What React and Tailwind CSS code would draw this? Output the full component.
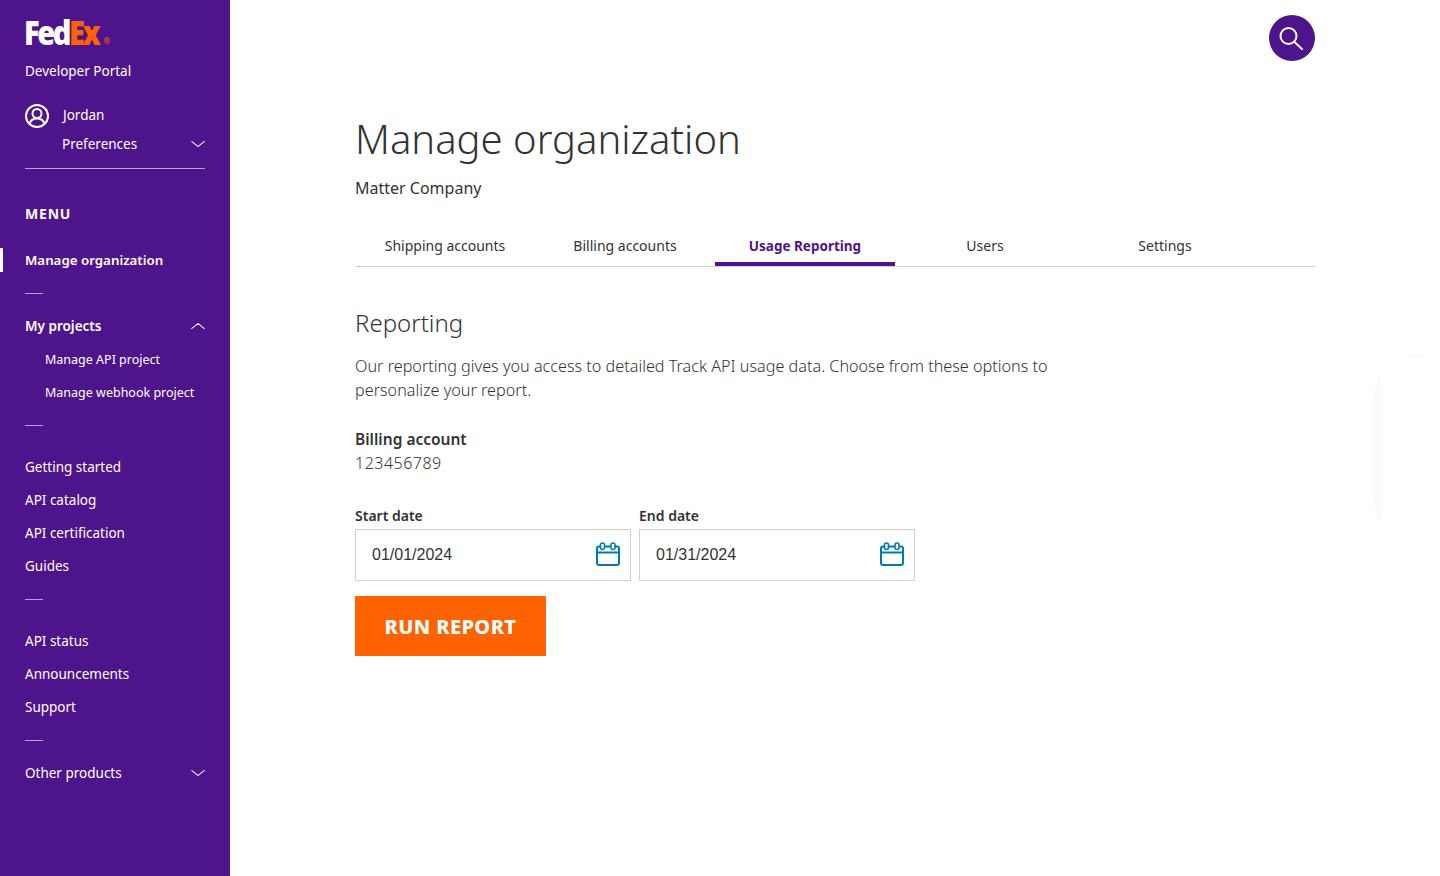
import { ChevronDown, ChevronUp } from "lucide-react";

const Dash = ({ className = "" }) => <div className={`w-[18px] h-px bg-white/60 ml-[25px] ${className}`} />;

const NavItem = ({ children, bold, sub }) => (
  <a href="#" className={`flex items-center h-[33px] text-white ${sub ? "pl-[45px] pt-[2px] text-[12.5px]" : "pl-[25px] text-[13.5px]"} ${bold ? "font-semibold" : ""}`}>
    {children}
  </a>
);

function CalendarIcon() {
  return (
    <svg width="24" height="24" viewBox="0 0 24 24" fill="none" stroke="#007ab7" strokeWidth="2" className="shrink-0 -mt-[2px]">
      <rect x="1" y="4.500" width="22" height="18.500" rx="2" />
      <path d="M1 10.500h22" />
      <rect x="4.500" y="1" width="4" height="6.500" rx="2" fill="#fff" strokeWidth="1.600" />
      <rect x="15" y="1" width="4" height="6.500" rx="2" fill="#fff" strokeWidth="1.600" />
    </svg>
  );
}

function DateField({ label, value }) {
  return (
    <div className="w-[276px]">
      <label className="block text-[14px] leading-[18px] font-semibold text-[#333] mb-[4px]">{label}</label>
      <div className="h-[52px] border border-[#d0d0d0] flex items-center justify-between pl-4 pr-[10px]">
        <span className="text-[16px] text-[#333] font-['Liberation_Sans',sans-serif]">{value}</span>
        <CalendarIcon />
      </div>
    </div>
  );
}

const tabs = ["Shipping accounts", "Billing accounts", "Usage Reporting", "Users", "Settings"];

export default function App() {
  return (
    <div className="relative flex min-h-[876px] bg-white overflow-hidden font-['Noto_Sans',sans-serif]">
      {/* Sidebar */}
      <aside className="w-[230px] shrink-0 bg-[#4d148c] text-white">
        <div className="pl-[24px] pt-[14px] h-[44px] flex items-start">
          <span className="text-[29px] leading-[36px] font-extrabold tracking-[-2.4px] scale-y-[1.15] font-['Open_Sans',sans-serif]">
            Fed<span className="text-[#ff6200]">Ex</span>
          </span>
          <span className="text-[#ff6200] text-[8px] ml-[5px] mt-[23px] leading-none">®</span>
        </div>
        <div className="pl-[25px] mt-[17px] text-[13.5px] leading-5">Developer Portal</div>

        <div className="mx-[25px] mt-[23px] pb-[11px] border-b border-white/60">
          <div className="flex items-center h-[24px]">
            <svg width="24" height="24" viewBox="0 0 24 24" fill="none" stroke="#fff" strokeWidth="2" className="shrink-0">
              <circle cx="12" cy="12" r="11" />
              <circle cx="12" cy="9.500" r="4.500" />
              <path d="M4.500 20c1-4 4-5.500 7.500-5.500s6.500 1.500 7.500 5.500" />
            </svg>
            <span className="ml-[14px] text-[13.5px] pb-[2px]">Jordan</span>
          </div>
          <div className="flex items-center justify-between mt-[5px] h-[24px] pl-[37px]">
            <span className="text-[13.5px] pb-[1px]">Preferences</span>
            <ChevronDown size={20} strokeWidth={1.2} className="-mr-[3px] -mt-[2px] scale-x-125" />
          </div>
        </div>

        <div className="pl-[25px] mt-[35px] text-[14px] leading-5 font-bold tracking-[0.8px]">MENU</div>

        <div className="mt-[24px] border-l-[3px] border-white h-[24px] flex items-center pt-[2px] pl-[22px] text-[13.3px] font-semibold">
          Manage organization
        </div>

        <Dash className="mt-[21px]" />
        <div className="mt-[16px] relative">
          <NavItem bold>My projects</NavItem>
          <ChevronUp size={20} strokeWidth={1.2} className="absolute right-[22px] top-[6px] scale-x-125" />
        </div>
        <NavItem sub>Manage API project</NavItem>
        <NavItem sub>Manage webhook project</NavItem>
        <Dash className="mt-[16px]" />

        <div className="mt-[25px]">
          <NavItem>Getting started</NavItem>
          <NavItem>API catalog</NavItem>
          <NavItem>API certification</NavItem>
          <NavItem>Guides</NavItem>
        </div>
        <Dash className="mt-[16px]" />

        <div className="mt-[25px]">
          <NavItem>API status</NavItem>
          <NavItem>Announcements</NavItem>
          <NavItem>Support</NavItem>
        </div>
        <Dash className="mt-[16px]" />

        <div className="mt-[16px] relative">
          <NavItem>Other products</NavItem>
          <ChevronDown size={20} strokeWidth={1.2} className="absolute right-[22px] top-[6px] scale-x-125" />
        </div>
      </aside>

      {/* Main */}
      <main className="w-[960px] ml-[125px]">
        <div className="flex justify-end pt-[15px]">
          <button className="w-[46px] h-[46px] rounded-full bg-[#4d148c] flex items-center justify-center">
            <svg width="26" height="26" viewBox="0 0 26 26" fill="none" stroke="#fff" strokeWidth="2" strokeLinecap="round">
              <circle cx="9.500" cy="11" r="8" />
              <path d="M15.500 17l7.500 7" />
            </svg>
          </button>
        </div>

        <h1 className="mt-[48px] text-[40px] leading-[60px] font-light text-[#333]">Manage organization</h1>
        <p className="mt-[7px] text-[16px] leading-6 text-[#333]">Matter Company</p>

        <div className="mt-[26px] flex border-b border-[#d0d0d0] h-[41px]">
          {tabs.map((t) => (
            <div
              key={t}
              className={`w-[180px] h-[40px] flex items-center justify-center ${t === "Usage Reporting" ? "text-[13.500px] font-bold text-[#4d148c] border-b-[4px] border-[#4d148c] pt-[4px]" : "text-[14px] pb-[2px] text-[#333]"}`}
            >
              {t}
            </div>
          ))}
        </div>

        <h2 className="mt-[38px] text-[24px] leading-9 font-light text-[#333]">Reporting</h2>
        <p className="mt-[13px] w-[720px] text-[16.2px] leading-6 font-light text-[#333]">
          Our reporting gives you access to detailed Track API usage data. Choose from these options to personalize your report.
        </p>

        <p className="mt-[25px] text-[15.5px] leading-6 font-semibold text-[#333]">Billing account</p>
        <p className="text-[16px] leading-6 font-light tracking-[0.5px] text-[#333]">123456789</p>

        <div className="mt-[32px] flex gap-2">
          <DateField label="Start date" value="01/01/2024" />
          <DateField label="End date" value="01/31/2024" />
        </div>

        <button className="mt-[15px] w-[191px] h-[60px] pt-[2px] bg-[#ff6200] text-white text-[20px] font-extrabold tracking-[0.4px]">
          RUN REPORT
        </button>
      </main>

      {/* faint edge of an off-canvas panel */}
      <div className="absolute left-[1373px] top-[375px] w-[8px] h-[147px] bg-[#fafafa] rounded-l-[8px_40px]" />
      <div className="absolute left-[1406px] top-[356px] w-[24px] h-px bg-[#fafafa]" />
      <div className="absolute left-[1410px] top-[541px] w-[12px] h-px bg-[#fafafa]" />
    </div>
  );
}
